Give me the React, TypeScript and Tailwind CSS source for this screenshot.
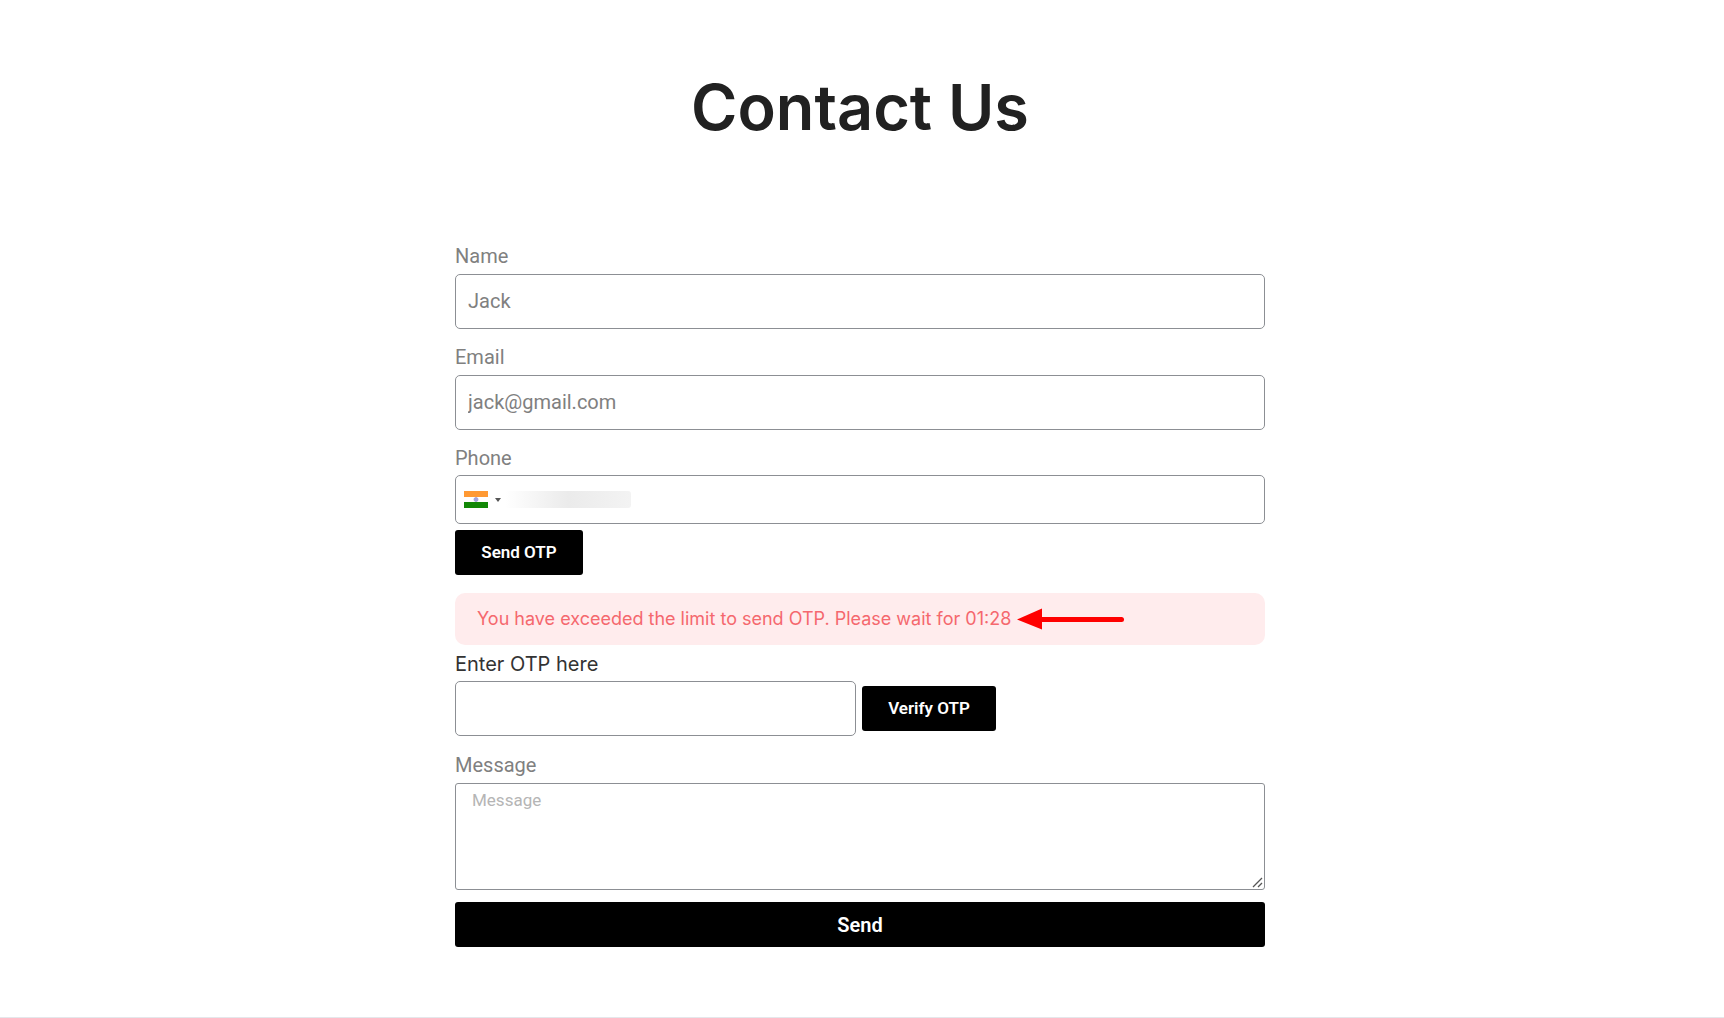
import React, { useState } from 'react';

const inputClass =
  'block w-full h-[55px] px-3 pb-0.5 border border-[#8c8f94] rounded-[5px] bg-white text-xl text-[#808080] placeholder:text-[#808080] focus:outline-none focus:border-black';
const labelClass = 'block h-[30px] text-xl leading-6 text-[#808080]';
const buttonClass =
  'h-[45px] bg-black text-white font-semibold rounded-[3px] hover:bg-gray-800';

const IndiaFlag: React.FC = () => (
  <svg width="24" height="17" viewBox="0 0 24 17" aria-hidden="true">
    <rect width="24" height="17" fill="#ffffff" />
    <rect width="24" height="6" fill="#ff9933" />
    <rect y="11" width="24" height="6" fill="#128807" />
    <circle cx="12" cy="8.5" r="2" fill="#a3a3dc" stroke="#9a9ad4" strokeWidth="0.8" />
  </svg>
);

const Arrow: React.FC = () => (
  <svg width="108" height="22" viewBox="0 0 108 22" className="shrink-0" aria-hidden="true">
    <path d="M0 11.500 25 0.500v21z" fill="#ff0000" />
    <path d="M24 11.500H104.500" stroke="#ff0000" strokeWidth="5" strokeLinecap="round" />
  </svg>
);

const App: React.FC = () => {
  const [phone, setPhone] = useState('');
  const [otp, setOtp] = useState('');
  const [message, setMessage] = useState('');

  return (
    <main className="min-h-screen flex flex-col bg-white border-b border-gray-200 pr-1 font-['Roboto',sans-serif]">
      <h1 className="pt-[67px] text-center text-[63px] leading-20 font-semibold text-[#212121] font-['Inter',sans-serif]">
        Contact Us
      </h1>

      <form
        className="w-full max-w-[810px] mx-auto mt-[97px] mb-16"
        onSubmit={(e) => e.preventDefault()}
      >
        <div className="mb-4">
          <label htmlFor="name" className={labelClass}>Name</label>
          <input id="name" type="text" placeholder="Jack" className={inputClass} />
        </div>

        <div className="mb-4">
          <label htmlFor="email" className={labelClass}>Email</label>
          <input id="email" type="email" placeholder="jack@gmail.com" className={inputClass} />
        </div>

        <div>
          <label htmlFor="phone" className="block h-[29px] text-xl leading-6 text-[#808080]">Phone</label>
          <div className="flex items-center h-[49px] px-2 border border-[#8c8f94] rounded-[5px]">
            <button type="button" aria-label="Country" className="flex items-center gap-[7px]">
              <IndiaFlag />
              <svg width="6" height="4" viewBox="0 0 6 4" aria-hidden="true">
                <path d="M0 0h6L3 4z" fill="#555555" />
              </svg>
            </button>
            <div className="w-[126px] h-[17px] ml-1 rounded-[3px] bg-linear-to-r from-white via-[#ebebeb] to-[#f3f3f3]">
              <input
                id="phone"
                type="tel"
                value={phone}
                onChange={(e) => setPhone(e.target.value)}
                className="block w-full h-full bg-transparent text-base focus:outline-none"
              />
            </div>
          </div>
        </div>
        <button type="button" className={`${buttonClass} mt-1.5 w-32 text-[17px]`}>Send OTP</button>

        <div
          role="alert"
          className="flex items-center gap-1.5 h-[52px] mt-[18px] px-[22px] rounded-[10px] bg-[#ffeced] text-lg text-[#f5686e] font-['Inter',sans-serif]"
        >
          <span>You have exceeded the limit to send OTP. Please wait for 01:28</span>
          <Arrow />
        </div>

        <label
          htmlFor="otp"
          className="block h-[29px] mt-[7px] text-xl leading-6 text-[#333333] font-['Inter',sans-serif]"
        >
          Enter OTP here
        </label>
        <div className="flex items-center gap-1.5">
          <div className="w-[401px]">
            <input
              id="otp"
              type="text"
              value={otp}
              onChange={(e) => setOtp(e.target.value)}
              className={inputClass}
            />
          </div>
          <button type="button" className={`${buttonClass} w-[134px] text-[17px]`}>Verify OTP</button>
        </div>

        <div className="mt-[17px] mb-3">
          <label htmlFor="message" className={labelClass}>Message</label>
          <div className="relative">
            <textarea
              id="message"
              placeholder="Message"
              value={message}
              onChange={(e) => setMessage(e.target.value)}
              className="block w-full h-[107px] px-4 py-1 border border-[#8c8f94] rounded-[3px] text-[17px] leading-6 text-[#808080] placeholder:text-[#b5b5b5] resize-none focus:outline-none"
            />
            <svg
              width="11"
              height="11"
              viewBox="0 0 11 11"
              className="absolute right-0.5 bottom-0.5 pointer-events-none"
              aria-hidden="true"
            >
              <path d="M1 10 10 1M6 10l4-4" stroke="#555555" strokeWidth="1.3" />
            </svg>
          </div>
        </div>

        <button type="submit" className={`${buttonClass} w-full text-xl`}>Send</button>
      </form>
    </main>
  );
};

export default App;
